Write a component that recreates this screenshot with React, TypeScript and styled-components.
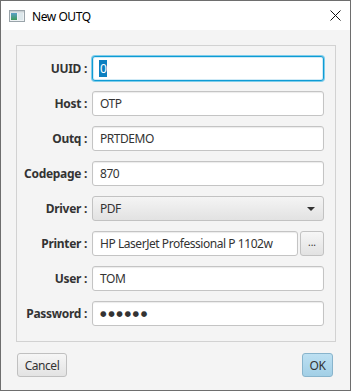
import React from 'react';
import styled, { createGlobalStyle } from 'styled-components';

const GlobalStyle = createGlobalStyle`
  html, body {
    margin: 0;
    padding: 0;
    background: #ffffff;
  }
  * {
    box-sizing: border-box;
  }
`;

const font = `"Noto Sans", "Liberation Sans", sans-serif`;

const Window = styled.div`
  width: 351px;
  height: 391px;
  border: 1px solid #6e6e6e;
  display: flex;
  flex-direction: column;
  font-family: ${font};
  font-size: 12px;
  letter-spacing: -0.45px;
  color: #333;
  background: #f4f4f4;
`;

const TitleBar = styled.div`
  height: 29px;
  background: #ffffff;
  display: flex;
  align-items: center;
  padding: 0 9px 0 8px;
  gap: 7px;
`;

const Title = styled.div`
  flex: 1;
  color: #000;
  font-size: 12px;
  padding-top: 1px;
`;

const Body = styled.div`
  flex: 1;
  display: flex;
  flex-direction: column;
  padding: 15px 14px 0 15px;
`;

const Panel = styled.div`
  height: 297px;
  border: 1px solid #d2d2d2;
  padding: 10px 11px 0 0;
  display: grid;
  grid-template-columns: 70px 1fr;
  grid-auto-rows: 25px;
  column-gap: 5px;
  row-gap: 10px;
  align-items: center;
`;

const Label = styled.label`
  text-align: right;
  font-weight: bold;
  letter-spacing: -0.3px;
  color: #333;
  white-space: nowrap;
`;

const Field = styled.div<{ focused?: boolean }>`
  height: 25px;
  background: #fff;
  border: ${p => (p.focused ? '1px solid #0e9bd4' : '1px solid #c4c4c4')};
  box-shadow: ${p =>
    p.focused ? '0 0 0 1px #7fcdea, inset 0 0 0 1px #cfeaf6' : 'inset 0 1px 1px #ececec'};
  border-radius: 3px;
  display: flex;
  align-items: center;
  padding: 0 7px;
  color: #333;
  white-space: nowrap;
  overflow: hidden;
`;

const Selected = styled.span`
  background: #0b7fc0;
  color: #fff;
  padding: 0 1px;
  margin-left: -1px;
`;

const Dots = styled.span`
  letter-spacing: 1.6px;
  font-size: 7.5px;
  font-family: "DejaVu Sans", sans-serif;
`;

const Combo = styled.div`
  height: 25px;
  border: 1px solid #c2c2c2;
  border-radius: 3px;
  background: linear-gradient(#f4f4f4, #e2e2e2);
  display: flex;
  align-items: center;
  padding: 0 8px 0 7px;
  color: #333;
`;

const ComboText = styled.span`
  flex: 1;
`;

const Arrow = styled.span`
  width: 0;
  height: 0;
  border-left: 4px solid transparent;
  border-right: 4px solid transparent;
  border-top: 4px solid #333;
`;

const PrinterRow = styled.div`
  display: flex;
  gap: 2px;
`;

const GrowField = styled(Field)`
  flex: 1;
`;

const SmallButton = styled.div`
  width: 24px;
  height: 25px;
  border: 1px solid #c2c2c2;
  border-radius: 3px;
  background: linear-gradient(#f6f6f6, #e2e2e2);
  display: flex;
  align-items: flex-end;
  justify-content: center;
  padding-bottom: 6px;
  font-size: 10px;
  letter-spacing: 0;
  color: #333;
`;

const Footer = styled.div`
  display: flex;
  justify-content: space-between;
  padding: 11px 3px 0 1px;
`;

const Button = styled.div<{ primary?: boolean }>`
  height: 24px;
  padding: 0 6px;
  border: 1px solid ${p => (p.primary ? '#88b4cc' : '#c0c0c0')};
  border-radius: 3px;
  background: ${p =>
    p.primary ? 'linear-gradient(#bde0f2, #a2cfe6)' : 'linear-gradient(#f6f6f6, #e3e3e3)'};
  display: flex;
  align-items: center;
  justify-content: center;
  color: #333;
  font-size: 12px;
  min-width: ${p => (p.primary ? '31px' : '50px')};
`;

const WindowIcon = () => (
  <svg width="16" height="14" viewBox="0 0 16 14">
    <defs>
      <linearGradient id="ig" x1="0" y1="0" x2="0" y2="1">
        <stop offset="0" stopColor="#5aa0c8" />
        <stop offset="1" stopColor="#3d9a5a" />
      </linearGradient>
    </defs>
    <rect x="0.5" y="1.5" width="15" height="11" fill="#eef2f4" stroke="#9aa4aa" />
    <rect x="2" y="4" width="6" height="7" fill="url(#ig)" />
    <rect x="9" y="4" width="5" height="7" fill="#dde8ec" />
    <rect x="1" y="2" width="14" height="1.5" fill="#c7d0d4" />
  </svg>
);

const CloseIcon = () => (
  <svg width="11" height="11" viewBox="0 0 11 11">
    <path d="M0.5 0.5 L10.5 10.5 M10.5 0.5 L0.5 10.5" stroke="#111" strokeWidth="1" />
  </svg>
);

const App: React.FC = () => {
  return (
    <>
      <GlobalStyle />
      <Window>
        <TitleBar>
          <WindowIcon />
          <Title>New OUTQ</Title>
          <CloseIcon />
        </TitleBar>
        <Body>
          <Panel>
            <Label>UUID :</Label>
            <Field focused>
              <Selected>0</Selected>
            </Field>

            <Label>Host :</Label>
            <Field>OTP</Field>

            <Label>Outq :</Label>
            <Field>PRTDEMO</Field>

            <Label>Codepage :</Label>
            <Field>870</Field>

            <Label>Driver :</Label>
            <Combo>
              <ComboText>PDF</ComboText>
              <Arrow />
            </Combo>

            <Label>Printer :</Label>
            <PrinterRow>
              <GrowField>HP LaserJet Professional P 1102w</GrowField>
              <SmallButton>...</SmallButton>
            </PrinterRow>

            <Label>User :</Label>
            <Field>TOM</Field>

            <Label>Password :</Label>
            <Field>
              <Dots>●●●●●●</Dots>
            </Field>
          </Panel>
          <Footer>
            <Button>Cancel</Button>
            <Button primary>OK</Button>
          </Footer>
        </Body>
      </Window>
    </>
  );
};

export default App;
